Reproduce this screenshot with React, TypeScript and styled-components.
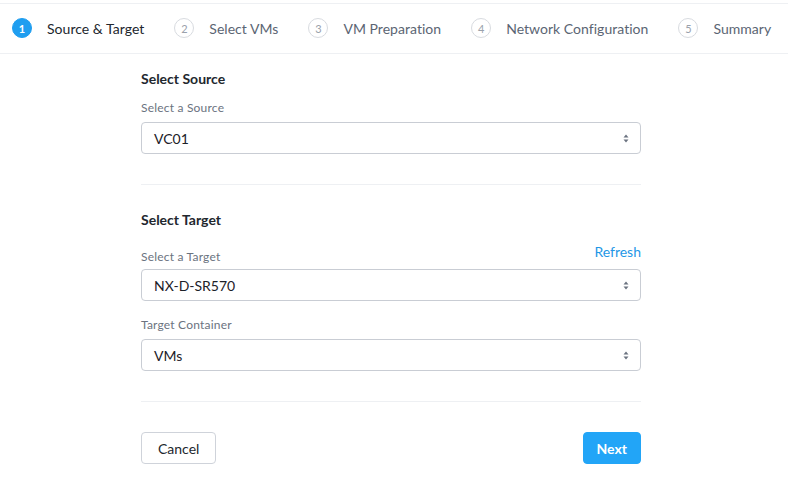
import React from "react";
import styled, { createGlobalStyle } from "styled-components";

const Global = createGlobalStyle`
  html, body { margin: 0; padding: 0; background: #fff; }
  body { font-family: Lato, "Open Sans", "Liberation Sans", sans-serif; color: #22272e; }
  * { box-sizing: border-box; }
`;

const Page = styled.div`
  width: 788px;
  height: 479px;
  padding-top: 3px;
  overflow: hidden;
`;

const Steps = styled.div`
  display: flex;
  align-items: center;
  height: 51px;
  padding-left: 12px;
  padding-bottom: 1px;
  border-top: 1px solid #eef0f3;
  border-bottom: 1px solid #eef0f3;
  gap: 30px;
`;

const Step = styled.div`
  display: flex;
  align-items: center;
  gap: 15px;
`;

const StepNum = styled.span<{ $active?: boolean }>`
  width: 20px;
  height: 20px;
  border-radius: 50%;
  display: flex;
  align-items: center;
  justify-content: center;
  font-size: 11px;
  font-weight: ${(p) => (p.$active ? 700 : 400)};
  color: ${(p) => (p.$active ? "#fff" : "#9aa1ab")};
  background: ${(p) => (p.$active ? "#1f9ef0" : "#fff")};
  border: 1px solid ${(p) => (p.$active ? "#1f9ef0" : "#d8dbe0")};
`;

const StepLabel = styled.span<{ $active?: boolean }>`
  font-size: 14px;
  letter-spacing: 0.03px;
  color: ${(p) => (p.$active ? "#22272e" : "#5b6573")};
`;

const Content = styled.div`
  width: 500px;
  margin-left: 141px;
  display: flex;
  flex-direction: column;
`;

const Heading = styled.div<{ $mt: number }>`
  font-size: 14px;
  line-height: 20px;
  font-weight: 700;
  color: #22272e;
  margin-top: ${(p) => p.$mt}px;
`;

const LabelRow = styled.div<{ $mt: number }>`
  display: flex;
  justify-content: space-between;
  align-items: baseline;
  margin-top: ${(p) => p.$mt}px;
  height: 16px;
`;

const Label = styled.span`
  font-size: 12px;
  line-height: 16px;
  letter-spacing: 0.2px;
  color: #6b7380;
`;

const Link = styled.span`
  font-size: 14px;
  color: #1f97e6;
  position: relative;
  top: -4px;
`;

const Select = styled.div`
  margin-top: 6px;
  height: 32px;
  border: 1px solid #c9cdd4;
  border-radius: 4px;
  display: flex;
  align-items: center;
  justify-content: space-between;
  padding: 0 11px 0 12px;
  font-size: 14px;
  color: #1c2128;
`;

const Divider = styled.div<{ $mt: number }>`
  height: 1px;
  background: #eef0f3;
  margin-top: ${(p) => p.$mt}px;
`;

const Footer = styled.div`
  display: flex;
  justify-content: space-between;
  margin-top: 30px;
`;

const Button = styled.button<{ $primary?: boolean }>`
  height: 32px;
  padding: 0 ${(p) => (p.$primary ? 13 : 16)}px;
  border-radius: 4px;
  font-family: inherit;
  font-size: 14px;
  font-weight: ${(p) => (p.$primary ? 700 : 400)};
  color: ${(p) => (p.$primary ? "#fff" : "#22272e")};
  background: ${(p) => (p.$primary ? "#22a5f7" : "#fff")};
  border: 1px solid ${(p) => (p.$primary ? "#22a5f7" : "#cfd3da")};
`;

const Caret = () => (
  <svg width="6" height="9" viewBox="0 0 6 9">
    <path d="M3 0.5 L5.5 3.5 H0.5 Z" fill="#6b7380" />
    <path d="M3 8.5 L5.5 5.5 H0.5 Z" fill="#6b7380" />
  </svg>
);

const steps = ["Source & Target", "Select VMs", "VM Preparation", "Network Configuration", "Summary"];

export default function App() {
  return (
    <Page>
      <Global />
      <Steps>
        {steps.map((s, i) => (
          <Step key={s}>
            <StepNum $active={i === 0}>{i + 1}</StepNum>
            <StepLabel $active={i === 0}>{s}</StepLabel>
          </Step>
        ))}
      </Steps>
      <Content>
        <Heading $mt={15}>Select Source</Heading>
        <LabelRow $mt={11}>
          <Label>Select a Source</Label>
        </LabelRow>
        <Select>
          <span>VC01</span>
          <Caret />
        </Select>
        <Divider $mt={30} />
        <Heading $mt={25}>Select Target</Heading>
        <LabelRow $mt={17}>
          <Label>Select a Target</Label>
          <Link>Refresh</Link>
        </LabelRow>
        <Select>
          <span>NX-D-SR570</span>
          <Caret />
        </Select>
        <LabelRow $mt={16}>
          <Label>Target Container</Label>
        </LabelRow>
        <Select>
          <span>VMs</span>
          <Caret />
        </Select>
        <Divider $mt={30} />
        <Footer>
          <Button>Cancel</Button>
          <Button $primary>Next</Button>
        </Footer>
      </Content>
    </Page>
  );
}
